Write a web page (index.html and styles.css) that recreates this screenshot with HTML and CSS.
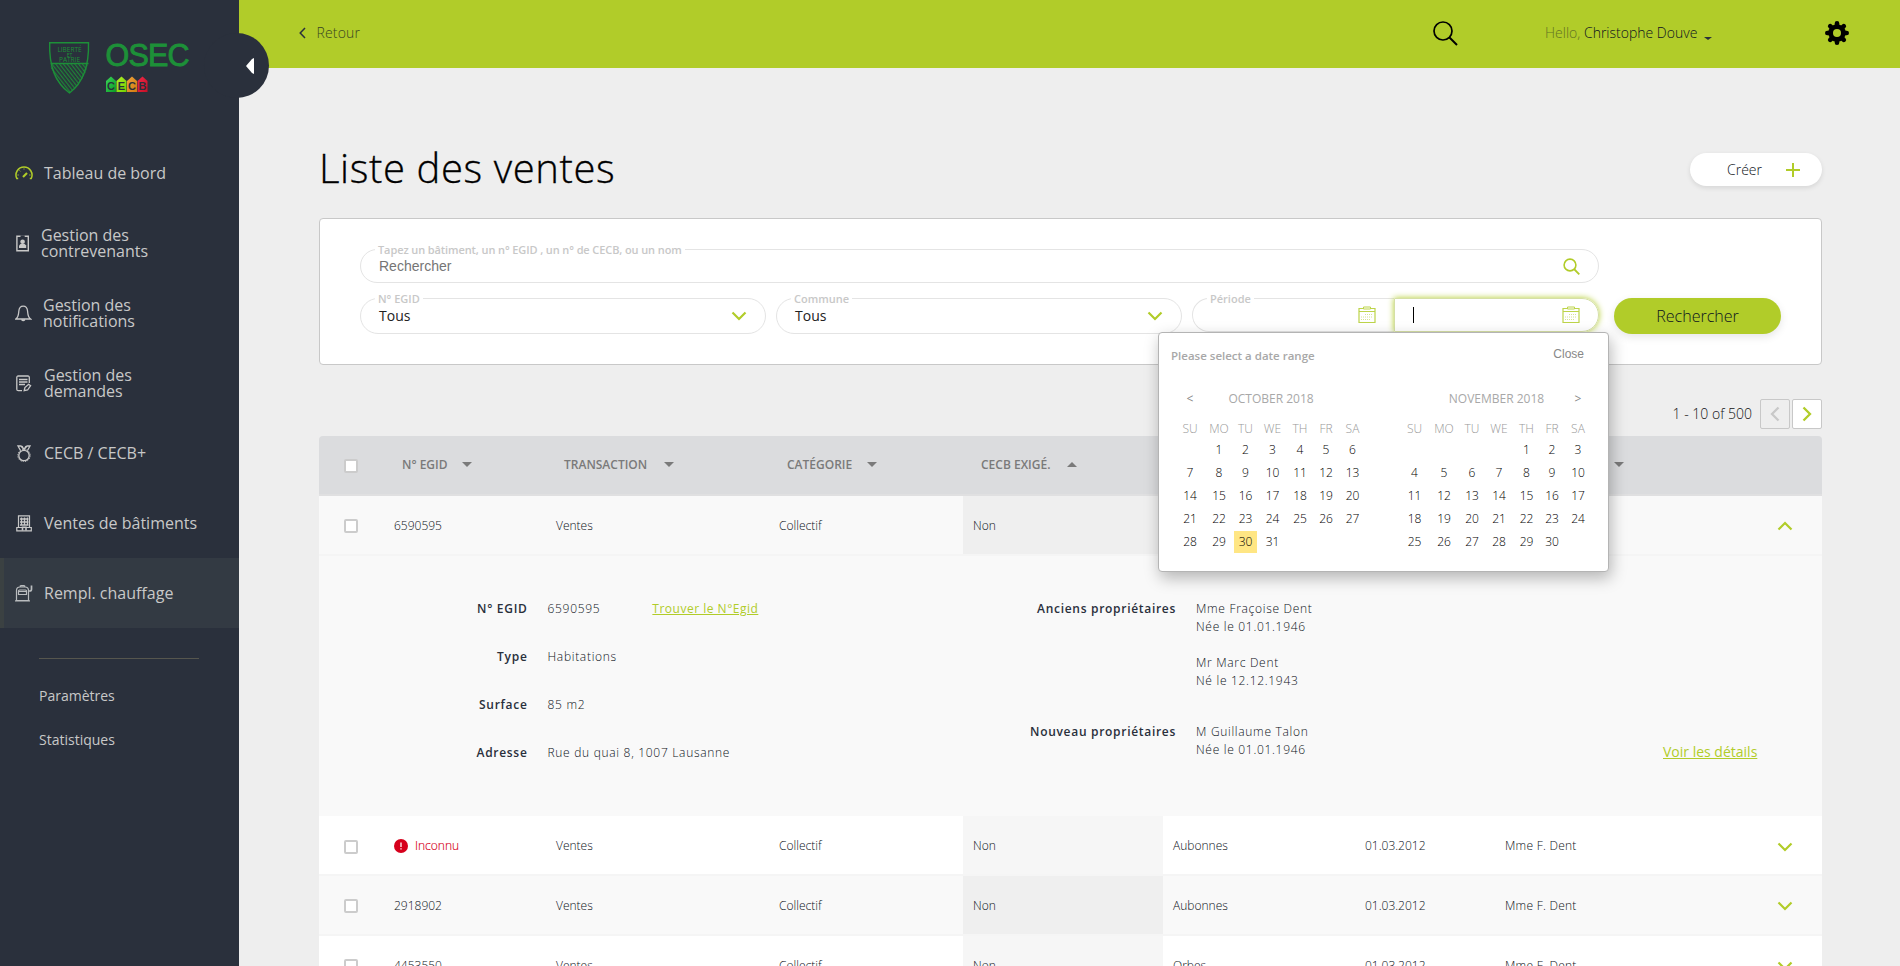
FILE: index.html
```html
<!DOCTYPE html>
<html lang="fr">
<head>
<meta charset="utf-8">
<title>Liste des ventes</title>
<link rel="stylesheet" href="styles.css">
</head>
<body>
<div class="app">
  <aside class="sidebar">
    <svg class="logo" width="160" height="60" viewBox="0 0 160 60">
      <defs>
        <pattern id="hatch" width="3" height="3" patternUnits="userSpaceOnUse" patternTransform="rotate(-38)"><path d="M.7 0V3" stroke="#1d9038" stroke-width="1.1"/></pattern>
        <linearGradient id="g1" x2="1" y2="1"><stop offset="0" stop-color="#3bd65b"/><stop offset="1" stop-color="#0a9a24"/></linearGradient>
        <linearGradient id="g2" x2="1" y2="1"><stop offset="0" stop-color="#b6f02a"/><stop offset="1" stop-color="#6fd000"/></linearGradient>
        <linearGradient id="g3" x2="1" y2="1"><stop offset="0" stop-color="#f0a43c"/><stop offset="1" stop-color="#d07a10"/></linearGradient>
        <linearGradient id="g4" x2="1" y2="1"><stop offset="0" stop-color="#f02a48"/><stop offset="1" stop-color="#c40f26"/></linearGradient>
      </defs>
      <path d="M10.200 23.500H48Q45.500 40 29.500 52.500 12.500 40 10.200 23.500Z" fill="url(#hatch)"/>
      <path d="M9.700 2.800H48.500Q49.500 38 29.500 53 8.500 38 9.700 2.800ZM10.500 23.500H48.500" fill="none" stroke="#1d9038" stroke-width="1.4"/>
      <g class="motto"><text x="29.500" y="12">LIBERTÉ</text><text x="29.500" y="16.500" class="motto-small">ET</text><text x="29.500" y="22">PATRIE</text></g>
      <text class="brand" x="65.600" y="26" textLength="84">OSEC</text>
      <path fill="url(#g1)" d="M66 52V41l5-4.600 5 4.600v11z"/>
      <path fill="url(#g2)" d="M76.500 52V41l5-4.600 5 4.600v11z"/>
      <path fill="url(#g3)" d="M87 52V41l5-4.600 5 4.600v11z"/>
      <path fill="url(#g4)" d="M97.500 52V41l5-4.600 5 4.600v11z"/>
      <g class="cecb"><text x="71" y="50">C</text><text x="81.500" y="50">E</text><text x="92" y="50">C</text><text x="102.500" y="50">B</text></g>
    </svg>
    <nav class="menu">
      <a class="item"><svg width="18" height="16" viewBox="0 0 18 16" fill="none" stroke="#b1cc29" stroke-width="1.500"><path d="M3.200 13.500H1.800A8 8 0 1 1 16.200 13.500H14.800"/><path d="M8 12L12 8" stroke-width="2.200"/><path d="M9 3.500v1M4.600 5.500l.8.8M2.500 10h1.200M14.300 10h1.200" stroke-width="1"/></svg><span>Tableau de bord</span></a>
      <a class="item i2"><svg width="14" height="17" viewBox="0 0 14 17" fill="none" stroke="#c8c8c8" stroke-width="1.400"><path d="M.9 1.200h11.400v14.600H.9z"/><path d="M4.500 1.200h4.200" stroke="#2a303c" stroke-width="1.600"/><circle cx="6.600" cy="6.800" r="2.300" fill="#c8c8c8" stroke="none"/><path d="M3 13V10.500l1.500-1.500h4.200l1.500 1.500v2.500z" fill="#c8c8c8" stroke="none"/></svg><span>Gestion des<br>contrevenants</span></a>
      <a class="item i3"><svg width="17" height="17" viewBox="0 0 17 17" fill="none" stroke="#c8c8c8" stroke-width="1.300"><path d="M.8 14H15.600C12.800 12 12.900 9.500 12.600 6.200 12.300 3 10.700 1.200 8.200 1.200S4.100 3 3.800 6.200C3.500 9.500 3.600 12 .8 14Z"/><path d="M6.500 14.500q1.700 2 3.400 0" fill="#c8c8c8"/></svg><span>Gestion des<br>notifications</span></a>
      <a class="item i4"><svg width="16" height="17" viewBox="0 0 16 17" fill="none" stroke="#c8c8c8" stroke-width="1.300"><path d="M13.300 8V2.500Q13.300 1 11.800 1H2.300Q.8 1 .8 2.500v11.700q0 1.500 1.500 1.500H6"/><path d="M3 4.500h8.500M3 7h8.500M3 9.500h6"/><path d="M8.200 15.700l.7-3.200 3.700-3.200 2 1.400-3 4.300z"/></svg><span>Gestion des<br>demandes</span></a>
      <a class="item"><svg class="shift" width="16" height="17" viewBox="0 0 16 17" fill="none" stroke="#c8c8c8" stroke-width="1.300"><circle cx="8" cy="10.500" r="5.200"/><circle cx="8" cy="10.500" r="6.200" stroke-width="1" stroke-dasharray="1.200 1.200"/><path d="M4.500 5.500L2 1h3l3 3.500L11 1h3l-2.500 4.500M6 1l2 3.500L10 1"/></svg><span>CECB / CECB+</span></a>
      <a class="item"><svg class="shift" width="16" height="17" viewBox="0 0 16 17" fill="none" stroke="#c8c8c8" stroke-width="1.200"><path d="M2.500 12V.8h11V12M.8 15.800h14.500V12.500H.8z"/><path d="M4 4h8.500M4 7h8.500M4 10h8.500M5.500 2.500v8M8.500 2.500v8M11.500 2.500v8" stroke-width="1.300"/><path d="M6.500 15.500v-3.300h3.500v3.300" stroke-width="1.600"/></svg><span>Ventes de bâtiments</span></a>
      <a class="item active"><svg width="18" height="17" viewBox="0 0 18 17" fill="none" stroke="#b9bcbe" stroke-width="1.200"><path d="M1.500 15.500V5.500Q1.500 2 5 2h5q3.500 0 3.500 3.500v10zM0 15.800h15M5 2q0-1.300 1-1.300h3q1 0 1 1.300M3.500 9.500V6q0-1 1-1h6q1 0 1 1v3.500zM3.500 6.500h8"/><path d="M13.500 6h1.300q1.700 0 1.700-1.700V.5" stroke-width="1.700"/></svg><span>Rempl. chauffage</span></a>
    </nav>
    <hr class="rule">
    <nav class="submenu"><a>Paramètres</a><a>Statistiques</a></nav>
    <div class="toggle"><svg width="8" height="16" viewBox="0 0 8 16"><path d="M8 0V16L6 15 0 8 6 1Z" fill="#fff"/></svg></div>
  </aside>
  <div class="page">
    <header class="topbar">
      <a class="back"><svg width="7" height="12" viewBox="0 0 7 12"><path d="M6 1L1.200 6 6 11" fill="none" stroke="#2a303c" stroke-width="1.500"/></svg><span>Retour</span></a>
      <svg class="find" width="25" height="25" viewBox="0 0 25 25"><circle cx="10" cy="10" r="9" fill="none" stroke="#000" stroke-width="1.700"/><path d="M16.500 16.500L24 24" stroke="#000" stroke-width="2"/></svg>
      <div class="user"><span class="hello">Hello,</span> Christophe Douve<i class="caret"></i></div>
      <svg class="gear" width="24" height="24" viewBox="0 0 24 24"><g stroke="#000" stroke-width="4.600" stroke-linecap="round"><path d="M12 2.300v19.400M2.300 12h19.400M5.200 5.200l13.600 13.600M18.800 5.200L5.200 18.800"/></g><circle cx="12" cy="12" r="8.700"/><circle cx="12" cy="12" r="4" fill="#b1cc29"/></svg>
    </header>
    <main class="content">
      <div class="heading"><h1>Liste des ventes</h1><button class="create">Créer<svg width="14" height="14" viewBox="0 0 14 14"><path d="M7 0v14M0 7h14" stroke="#b1cc29" stroke-width="2"/></svg></button></div>
      <section class="filters">
        <div class="field search"><label>Tapez un bâtiment, un n° EGID , un n° de CECB, ou un nom</label><span class="ph">Rechercher</span><svg width="17" height="17" viewBox="0 0 17 17" fill="none" stroke="#b1cc29"><circle cx="7" cy="7" r="5.900" stroke-width="1.600"/><path d="M11 11l5.300 5.300" stroke-width="1.800"/></svg></div>
        <div class="line">
          <div class="field"><label>N° EGID</label><span>Tous</span><svg width="16" height="10" viewBox="0 0 16 10"><path d="M1.500 1.500L8 8l6.500-6.500" class="chev"/></svg></div>
          <div class="field"><label>Commune</label><span>Tous</span><svg width="16" height="10" viewBox="0 0 16 10"><path d="M1.500 1.500L8 8l6.500-6.500" class="chev"/></svg></div>
          <div class="period">
            <div class="field from"><label>Période</label><svg width="18" height="18" viewBox="0 0 18 18"><use href="#cal"/></svg></div>
            <div class="field to"><i class="cursor"></i><svg width="18" height="18" viewBox="0 0 18 18"><g id="cal" fill="none" stroke="#bdd44a"><path d="M1 2.500h16v14H1zM1 5.500h16" stroke-width="1.200"/><path d="M5.500 1h7v2h-7z" fill="#fff"/><path d="M7 8.500h8M3 11h12M3 13.500h10" stroke-dasharray="1 1" stroke-width="1" opacity=".6"/></g></svg></div>
            <div class="picker">
              <div class="picker-head"><b>Please select a date range</b><span>Close</span></div>
              <div class="months">
                <div class="month oct">
                  <span class="arrow">&lt;</span><span class="name">October 2018</span>
                  <i>Su</i><i>Mo</i><i>Tu</i><i>We</i><i>Th</i><i>Fr</i><i>Sa</i>
                  <span></span><span>1</span><span>2</span><span>3</span><span>4</span><span>5</span><span>6</span>
                  <span>7</span><span>8</span><span>9</span><span>10</span><span>11</span><span>12</span><span>13</span>
                  <span>14</span><span>15</span><span>16</span><span>17</span><span>18</span><span>19</span><span>20</span>
                  <span>21</span><span>22</span><span>23</span><span>24</span><span>25</span><span>26</span><span>27</span>
                  <span>28</span><span>29</span><span class="today">30</span><span>31</span>
                </div>
                <div class="month nov">
                  <span></span><span class="name">November 2018</span><span class="arrow">&gt;</span>
                  <i>Su</i><i>Mo</i><i>Tu</i><i>We</i><i>Th</i><i>Fr</i><i>Sa</i>
                  <span></span><span></span><span></span><span></span><span>1</span><span>2</span><span>3</span>
                  <span>4</span><span>5</span><span>6</span><span>7</span><span>8</span><span>9</span><span>10</span>
                  <span>11</span><span>12</span><span>13</span><span>14</span><span>15</span><span>16</span><span>17</span>
                  <span>18</span><span>19</span><span>20</span><span>21</span><span>22</span><span>23</span><span>24</span>
                  <span>25</span><span>26</span><span>27</span><span>28</span><span>29</span><span>30</span>
                </div>
              </div>
            </div>
          </div>
          <button class="submit">Rechercher</button>
        </div>
      </section>
      <div class="pager"><span>1 - 10 of 500</span><b class="off"><svg width="10" height="16" viewBox="0 0 10 16"><path d="M8.500 1.500L2 8l6.500 6.500"/></svg></b><b><svg width="10" height="16" viewBox="0 0 10 16"><path d="M1.500 1.500L8 8l-6.500 6.500"/></svg></b></div>
      <section class="table">
        <div class="row head"><i class="box"></i><span>N° EGID<i class="sort"></i></span><span>TRANSACTION<i class="sort wide"></i></span><span>CATÉGORIE<i class="sort mid"></i></span><span>CECB EXIGÉ.<i class="sort wide up"></i></span><span></span><span></span><span class="last"><i class="sort"></i></span></div>
        <div class="row odd"><i class="box"></i><span>6590595</span><span>Ventes</span><span>Collectif</span><span class="dim">Non</span><span></span><span></span><span></span><svg width="16" height="10" viewBox="0 0 16 10"><path d="M1.500 8.500L8 2l6.500 6.500" class="chev"/></svg></div>
        <div class="detail">
          <dl class="facts">
            <dt>N° EGID</dt><dd>6590595<a class="egid">Trouver le N°Egid</a></dd>
            <dt>Type</dt><dd>Habitations</dd>
            <dt>Surface</dt><dd>85 m2</dd>
            <dt>Adresse</dt><dd>Rue du quai 8, 1007 Lausanne</dd>
          </dl>
          <dl class="owners">
            <dt>Anciens propriétaires</dt><dd>Mme Fraçoise Dent<br>Née le 01.01.1946<br><br>Mr Marc Dent<br>Né le 12.12.1943</dd>
            <dt>Nouveau propriétaires</dt><dd>M Guillaume Talon<br>Née le 01.01.1946</dd>
          </dl>
          <a class="more">Voir les détails</a>
        </div>
        <div class="row"><i class="box"></i><span class="unknown"><svg width="14" height="14" viewBox="0 0 14 14"><circle cx="7" cy="7" r="7" fill="#d6001c"/><path d="M7 3.500v4.500M7 9.200v1.300" stroke="#fff" stroke-width="1.300"/></svg>Inconnu</span><span>Ventes</span><span>Collectif</span><span class="dim">Non</span><span>Aubonnes</span><span>01.03.2012</span><span class="person">Mme F. Dent</span><svg width="16" height="10" viewBox="0 0 16 10"><path d="M1.500 1.500L8 8l6.500-6.500" class="chev"/></svg></div>
        <div class="row odd"><i class="box"></i><span>2918902</span><span>Ventes</span><span>Collectif</span><span class="dim">Non</span><span>Aubonnes</span><span>01.03.2012</span><span class="person">Mme F. Dent</span><svg width="16" height="10" viewBox="0 0 16 10"><path d="M1.500 1.500L8 8l6.500-6.500" class="chev"/></svg></div>
        <div class="row"><i class="box"></i><span>4453550</span><span>Ventes</span><span>Collectif</span><span class="dim">Non</span><span>Orbes</span><span>01.03.2012</span><span class="person">Mme F. Dent</span><svg width="16" height="10" viewBox="0 0 16 10"><path d="M1.500 1.500L8 8l6.500-6.500" class="chev"/></svg></div>
      </section>
    </main>
  </div>
</div>
</body>
</html>
```
FILE: styles.css
```css
* { box-sizing: border-box; }
body { margin: 0; font-family: "Open Sans", "Noto Sans", sans-serif; font-weight: 300; color: #0c1220; background: #eee; }
button { font: inherit; color: inherit; border: 0; padding: 0; }
.app { display: flex; height: 966px; overflow: hidden; }

/* Sidebar */
.sidebar { position: relative; z-index: 1; width: 239px; flex: none; background: #2a303c; color: #c8c8c8; font-weight: 400; }
.logo { display: block; margin: 40px 0 38px 40px; }
.brand { font-family: "Liberation Sans", sans-serif; font-size: 30.500px; fill: #1d9038; stroke: #1d9038; stroke-width: .9px; }
.motto { font-size: 6.5px; fill: #1d9038; text-anchor: middle; }
.motto-small { font-size: 5px; }
.cecb { font-family: "Liberation Sans", sans-serif; font-size: 11px; font-weight: 700; fill: #2a303c; text-anchor: middle; }
.item { display: flex; align-items: center; gap: 11px; height: 70px; padding-left: 15px; font-size: 16px; line-height: 16px; }
.item svg { flex: none; }
.i2 { padding-left: 16px; }
.i3 { padding-left: 15px; }
.i4 { padding-left: 16px; gap: 12px; }
.shift { margin: 0 1px; }
.active { background: #333a43; border-left: 4px solid #3b4142; padding-left: 11px; }
.rule { width: 160px; height: 1px; margin: 30px 0 0 39px; border: 0; background: #56564e; }
.submenu { display: flex; flex-direction: column; gap: 25px; padding: 27px 0 0 39px; font-size: 14px; line-height: 19px; }
.toggle { position: absolute; left: 204px; top: 33px; width: 65px; height: 65px; border-radius: 50%; background: #2a303c; }
.toggle svg { position: absolute; left: 42px; top: 25px; }

/* Top bar */
.page { flex: 1; }
.topbar { display: flex; align-items: center; height: 68px; padding: 0 52px 2px 60px; background: #b1cc29; font-size: 14px; }
.back { display: flex; align-items: center; gap: 10.500px; margin-right: auto; letter-spacing: .15px; }
.back span { opacity: .75; margin-top: -1px; }
.find { margin-right: 87px; }
.user { width: 280px; margin-top: -1px; }
.hello { opacity: .5; }
.caret { display: inline-block; margin-left: 7px; vertical-align: -2px; border: 4px solid transparent; border-top: 3.500px solid #2a303c; border-bottom: 0; }

/* Heading */
.content { padding: 0 79px 0 80px; }
.heading { display: flex; align-items: center; justify-content: space-between; height: 150px; padding-top: 53px; }
h1 { margin: -4px 0 0; font-size: 40px; line-height: 54px; font-weight: 300; color: #000; letter-spacing: .6px; -webkit-text-stroke: .3px #000; }
.create { display: flex; align-items: center; justify-content: space-between; width: 132px; height: 33px; padding: 0 22px 0 37px; border-radius: 17px; background: #fff; font-size: 14px; box-shadow: 0 2px 5px rgba(0,0,0,.1); }

/* Filters */
.filters { height: 147px; padding: 30px 40px; background: #fff; border: 1px solid #c8c8c8; border-radius: 4px; }
.field { position: relative; display: flex; align-items: center; justify-content: space-between; width: 406px; height: 36px; padding: 0 18px 0 18px; border: 1px solid #e4e4e4; border-radius: 18px; font-size: 14px; color: #222; font-weight: 400; }
.field label { position: absolute; left: 14px; top: -8px; padding: 0 3px; background: #fff; font-size: 11px; line-height: 15px; color: #c8c8c8; font-weight: 600; white-space: nowrap; }
.line .field > span { margin-top: -2px; }
.search { width: 1239px; height: 34px; }
.search label { letter-spacing: -.1px; }
.ph { font-family: "Liberation Sans", sans-serif; color: #757575; }
.chev { fill: none; stroke: #b1cc29; stroke-width: 2.200; }
.line { display: flex; gap: 10px; margin-top: 15px; }
.period { position: relative; display: flex; margin-right: 5px; }
.from { width: 202px; height: 34px; border-radius: 17px 0 0 17px; border-right: 0; justify-content: flex-end; }
.to { width: 205px; height: 34px; border-radius: 0 17px 17px 0; box-shadow: 0 0 6px #b1cc29; border-color: #d5dfa5; }
.cursor { width: 1px; height: 16px; background: #000; }
.submit { width: 167px; height: 36px; border-radius: 18px; background: #b1cc29; font-size: 16px; box-shadow: 0 3px 8px rgba(0,0,0,.1); }

/* Date picker */
.picker { position: absolute; z-index: 2; left: -34px; top: 34px; width: 451px; height: 240px; background: #fff; border: 1px solid #b4b4b4; border-radius: 4px; box-shadow: 2px 6px 16px rgba(0,0,0,.28); font-size: 12px; color: #000; font-weight: 300; }
.picker-head { display: flex; justify-content: space-between; padding: 15px 24px 0 12px; height: 53px; color: #a8a8a8; }
.picker-head b { font-weight: 600; font-size: 11.5px; }
.picker-head span { margin-top: -1px; font-family: "Liberation Sans", sans-serif; font-weight: 400; color: #888; line-height: 14px; }
.months { display: flex; gap: 35px; padding-left: 17px; }
.month { display: grid; grid-auto-rows: 23px; line-height: 22px; text-align: center; }
.oct { grid-template-columns: 28px 30px 23px 31px 24px 28px 25px; }
.nov { grid-template-columns: 29px 30px 26px 28px 27px 24px 28px; }
.month { grid-template-rows: 30px 23px; }
.month i { font-style: normal; text-transform: uppercase; color: #999; line-height: 25px; }
.month .name { grid-column: span 5; text-transform: uppercase; color: #a8a8a8; line-height: 26px; font-weight: 400; }
.oct .name { grid-column: 2 / 8; padding-right: 27px; }
.arrow { line-height: 26px; color: #888; font-weight: 400; }
.today { height: 22px; background: #ffe684; }

/* Pager */
.pager { display: flex; justify-content: flex-end; align-items: center; gap: 2px; height: 71px; padding-top: 26px; font-size: 14px; color: #111; }
.pager span { margin: -1px 6px 0 0; }
.pager b { display: grid; place-items: center; width: 30px; height: 30px; border: 1px solid #c8c8c8; border-radius: 2px; background: #fff; }
.pager .off { background: #eee; }
.pager path { fill: none; stroke: #b1cc29; stroke-width: 2.300; }
.pager .off path { stroke: #c8c8c8; }

/* Table */
.table { font-size: 12px; border-radius: 4px 4px 0 0; overflow: hidden; }
.row { display: grid; grid-template-columns: 65px 162px 223px 194px 200px 192px 140px 282px 44px; align-items: stretch; height: 60px; line-height: 60px; border-bottom: 2px solid #f5f5f5; background: #fff; }
.row > span { padding-left: 10px; height: 58px; }
.row > svg { align-self: center; margin-top: 2px; }
.row .box { align-self: center; margin: 2px 0 0 25px; width: 14px; height: 14px; border: 2px solid #ccc; border-radius: 2px; background: #fff; }
.odd { background: #f9f9f9; }
.row .dim { background: #f6f6f6; }
.odd .dim { background: #efefef; }
.head { background: #dbdcde; border-color: #e0e0e1; color: #7a7a7a; font-weight: 600; line-height: 57px; }
.row.head > span { padding-left: 18px; white-space: nowrap; }
.row.head > .last { padding-left: 119px; }
.sort { display: inline-block; margin-left: 14px; vertical-align: 2px; border: 5.500px solid transparent; border-top: 5px solid #7a7a7a; border-bottom: 0; }
.mid { margin-left: 15px; }
.wide { margin-left: 17px; }
.up { border-top: 0; border-bottom: 5px solid #7a7a7a; }
.last .sort { margin-left: 0; }
.person { letter-spacing: .25px; }
.row > .unknown { display: flex; align-items: center; gap: 7px; height: 60px; color: #d6001c; -webkit-text-stroke: .15px; }
.detail { display: flex; height: 260px; padding-top: 44px; background: #f9f9f9; letter-spacing: .7px; line-height: 18px; }
.detail dl { display: grid; margin: 0; column-gap: 20px; align-content: start; }
.detail dt { text-align: right; font-weight: 600; color: #2a303c; }
.detail dd { margin: 0; }
.detail .facts { grid-template-columns: 208.500px 427.500px; column-gap: 20px; row-gap: 30px; }
.owners { grid-template-columns: 201px 446px; row-gap: 33px; }
.egid { margin-left: 52px; letter-spacing: .5px; color: #b1cc29; text-decoration: underline; font-weight: 400; }
.more { margin: 143px 0 0 21px; font-size: 14px; letter-spacing: 0; color: #b1cc29; text-decoration: underline; font-weight: 400; white-space: nowrap; }
```
